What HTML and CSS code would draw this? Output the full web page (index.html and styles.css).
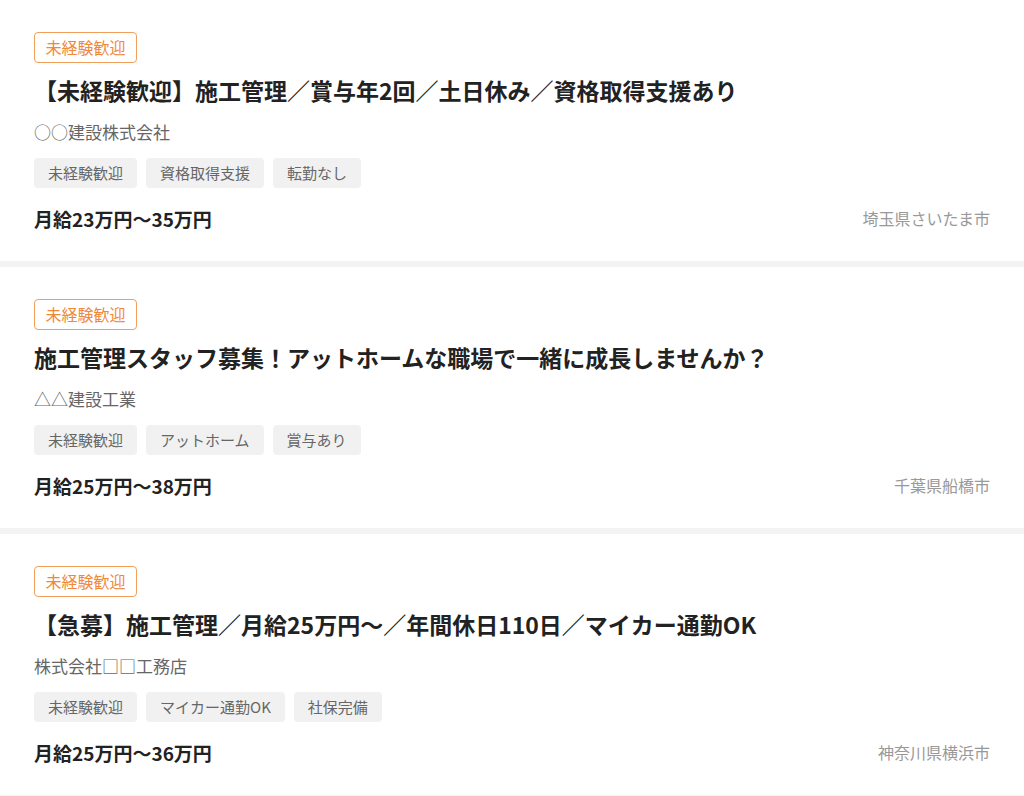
FILE: index.html
```html
<!DOCTYPE html>
<html lang="ja">
<head>
<meta charset="utf-8">
<title>求人一覧</title>
<link rel="stylesheet" href="styles.css">
</head>
<body>
<div class="list">
  <article class="card">
    <span class="badge">未経験歓迎</span>
    <h2 class="title">【未経験歓迎】施工管理／賞与年2回／土日休み／資格取得支援あり</h2>
    <p class="company"><span class="sym">○</span><span class="sym">○</span>建設株式会社</p>
    <ul class="tags">
      <li class="tag">未経験歓迎</li>
      <li class="tag">資格取得支援</li>
      <li class="tag">転勤なし</li>
    </ul>
    <div class="meta">
      <span class="salary">月給23万円〜35万円</span>
      <span class="place">埼玉県さいたま市</span>
    </div>
  </article>
  <article class="card">
    <span class="badge">未経験歓迎</span>
    <h2 class="title">施工管理スタッフ募集！アットホームな職場で一緒に成長しませんか？</h2>
    <p class="company"><span class="sym">△</span><span class="sym">△</span>建設工業</p>
    <ul class="tags">
      <li class="tag">未経験歓迎</li>
      <li class="tag">アットホーム</li>
      <li class="tag">賞与あり</li>
    </ul>
    <div class="meta">
      <span class="salary">月給25万円〜38万円</span>
      <span class="place">千葉県船橋市</span>
    </div>
  </article>
  <article class="card">
    <span class="badge">未経験歓迎</span>
    <h2 class="title">【急募】施工管理／月給25万円〜／年間休日110日／マイカー通勤OK</h2>
    <p class="company">株式会社<span class="sym">□</span><span class="sym">□</span>工務店</p>
    <ul class="tags">
      <li class="tag">未経験歓迎</li>
      <li class="tag">マイカー通勤OK</li>
      <li class="tag">社保完備</li>
    </ul>
    <div class="meta">
      <span class="salary">月給25万円〜36万円</span>
      <span class="place">神奈川県横浜市</span>
    </div>
  </article>
</div>
</body>
</html>
```

FILE: styles.css
```css
* { box-sizing: border-box; }
html, body {
  margin: 0;
  padding: 0;
  background: #f3f3f3;
  font-family: "Noto Sans CJK JP", "Noto Sans", sans-serif;
}
.list {
  display: flex;
  flex-direction: column;
  gap: 6px;
}
.card {
  background: #ffffff;
  height: 261px;
  padding: 32px 34px 0 34px;
  display: flex;
  flex-direction: column;
  align-items: flex-start;
}
.badge {
  display: inline-block;
  font-size: 16px;
  line-height: 21px;
  padding: 4px 10.5px;
  border: 1px solid #f0a05a;
  border-radius: 4px;
  color: #f0883a;
}
.title {
  margin: 11px 0 0 0;
  font-size: 23px;
  line-height: 32px;
  font-weight: 700;
  color: #222222;
}
.company {
  margin: 14px 0 0 0;
  font-size: 17px;
  line-height: 24px;
  color: #666666;
}
.sym {
  display: inline-block;
  width: 1em;
  text-align: center;
  font-family: "Noto Sans CJK SC", "Noto Sans CJK JP", sans-serif;
}
.tags {
  list-style: none;
  margin: 14px 0 0 0;
  padding: 0;
  display: flex;
  gap: 9px;
}
.tag {
  height: 30px;
  line-height: 30px;
  padding: 0 14px;
  font-size: 15px;
  color: #666666;
  background: #f1f1f1;
  border-radius: 4px;
}
.meta {
  margin-top: 17px;
  align-self: stretch;
  display: flex;
  justify-content: space-between;
  align-items: center;
  line-height: 27px;
}
.salary {
  font-size: 19px;
  font-weight: 700;
  color: #222222;
}
.place {
  font-size: 16px;
  color: #999999;
}
```
